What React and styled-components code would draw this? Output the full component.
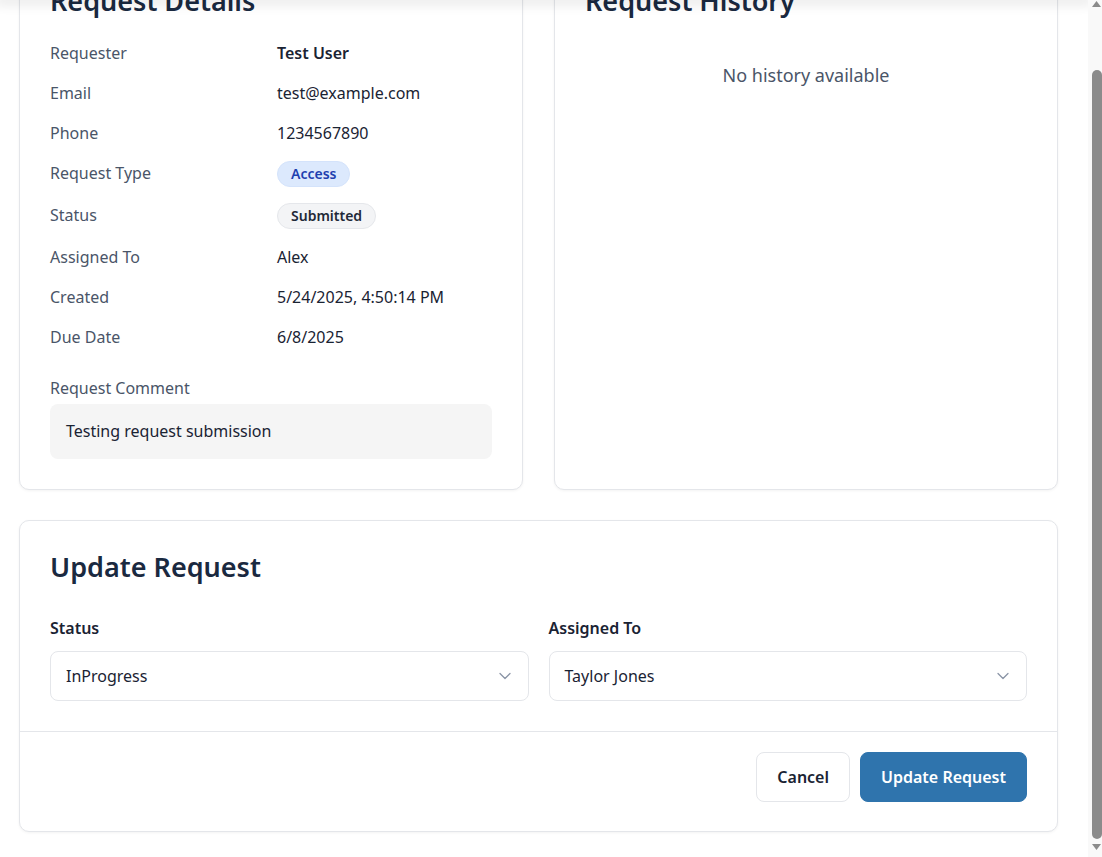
import React, { useLayoutEffect, useRef } from "react";
import styled, { createGlobalStyle } from "styled-components";
import { ChevronDown } from "lucide-react";

const GlobalStyle = createGlobalStyle`
  html, body { margin: 0; padding: 0; height: 100%; overflow: hidden; background: #ffffff; }
  body { font-family: "Segoe UI", "Noto Sans", "Open Sans", sans-serif; color: #1a202c; }
  * { box-sizing: border-box; }
`;

const Shell = styled.div`
  display: flex;
  height: 100vh;
`;

const ScrollArea = styled.div`
  flex: 1;
  min-width: 0;
  height: 100%;
  overflow-y: scroll;
  background: #ffffff;
  scrollbar-width: none;
  &::-webkit-scrollbar { display: none; }
`;

const Rail = styled.div`
  width: 14px;
  flex: none;
  display: flex;
  flex-direction: column;
  background: #f9f9f9;
`;

const RailArrow = styled.svg`
  display: block;
  width: 14px;
  height: ${(p) => p.$h}px;
  flex: none;
`;

const RailTrack = styled.div`
  flex: 1;
  display: flex;
  flex-direction: column;
  padding: 62px 0 4px 4px;
`;

const RailThumb = styled.div`
  flex: 1;
  background: #8b8b8b;
  border-radius: 5px;
`;

const TopShade = styled.div`
  position: sticky;
  top: 0;
  height: 0;
  z-index: 5;
  box-shadow: 0 0 12px 5px rgba(0, 0, 0, 0.09);
`;

const Page = styled.main`
  padding: 14px 30px 25px 19px;
  display: flex;
  flex-direction: column;
  gap: 30px;
`;

const TwoCol = styled.div`
  display: grid;
  grid-template-columns: 1fr 1fr;
  gap: 31px;
`;

const Card = styled.section`
  background: #ffffff;
  border: 1px solid #e4e6ea;
  border-radius: 10px;
  box-shadow: 0 1px 3px rgba(0, 0, 0, 0.05);
  padding: ${(p) => (p.$flush ? "0" : "30px")};
`;

const CardTitle = styled.h2`
  margin: 0 0 ${(p) => p.$gap || 16}px;
  font-size: 27px;
  line-height: 32px;
  font-weight: 600;
  color: #1a2940;
`;

const DetailList = styled.dl`
  margin: 0;
  display: grid;
  grid-template-columns: 227px 1fr;
`;

const Term = styled.dt`
  padding: 8px 0;
  font-size: 16px;
  line-height: 24px;
  color: #4a5568;
`;

const Value = styled.dd`
  margin: 0;
  padding: 8px 0;
  font-size: 16px;
  line-height: 24px;
  font-weight: ${(p) => (p.$strong ? 600 : 400)};
  color: #1a2333;
`;

const Badge = styled.span`
  display: inline-flex;
  align-items: center;
  vertical-align: top;
  height: 26px;
  padding: 0 13px;
  border-radius: 13px;
  font-size: 14px;
  font-weight: 600;
  border: 1px solid ${(p) => (p.$tone === "blue" ? "#d4e3fb" : "#e5e7eb")};
  background: ${(p) => (p.$tone === "blue" ? "#dce9fd" : "#f3f4f6")};
  color: ${(p) => (p.$tone === "blue" ? "#1e40af" : "#1f2937")};
`;

const CommentLabel = styled.div`
  margin-top: 19px;
  font-size: 16px;
  line-height: 24px;
  color: #4a5568;
`;

const CommentBox = styled.div`
  margin-top: 4px;
  background: #f5f5f5;
  border-radius: 8px;
  padding: 15px 16px 16px;
  font-size: 16px;
  line-height: 24px;
  color: #1a2333;
`;

const Empty = styled.p`
  margin: 0;
  padding: 29px 0;
  text-align: center;
  font-size: 18px;
  line-height: 27px;
  color: #4a5568;
`;

const FormBody = styled.div`
  padding: 30px;
`;

const FormGrid = styled.div`
  display: grid;
  grid-template-columns: 1fr 1fr;
  gap: 20px;
`;

const Field = styled.div`
  display: flex;
  flex-direction: column;
  gap: 11px;
`;

const FieldLabel = styled.label`
  font-size: 16px;
  line-height: 24px;
  font-weight: 600;
  color: #1a2333;
`;

const SelectBox = styled.button`
  display: flex;
  align-items: center;
  justify-content: space-between;
  height: 50px;
  padding: 0 13px 0 15px;
  background: #ffffff;
  border: 1px solid #e4e6ea;
  border-radius: 8px;
  font-family: inherit;
  font-size: 16px;
  color: #1a2333;
  text-align: left;
  cursor: pointer;

  svg { color: #8a94a6; }
`;

const Footer = styled.div`
  border-top: 1px solid #e4e6ea;
  padding: 20px 30px 29px;
  display: flex;
  justify-content: flex-end;
  gap: 10px;
`;

const Button = styled.button`
  height: 50px;
  padding: 0 20px;
  border-radius: 8px;
  font-family: inherit;
  font-size: 16px;
  font-weight: 600;
  cursor: pointer;
  border: 1px solid ${(p) => (p.$primary ? "#2f74ad" : "#e4e6ea")};
  background: ${(p) => (p.$primary ? "#2f74ad" : "#ffffff")};
  color: ${(p) => (p.$primary ? "#ffffff" : "#1a2333")};
`;

const details = [
  { label: "Requester", value: "Test User", strong: true },
  { label: "Email", value: "test@example.com" },
  { label: "Phone", value: "1234567890" },
  { label: "Request Type", badge: "Access", tone: "blue" },
  { label: "Status", badge: "Submitted", tone: "gray" },
  { label: "Assigned To", value: "Alex" },
  { label: "Created", value: "5/24/2025, 4:50:14 PM" },
  { label: "Due Date", value: "6/8/2025" },
];

function Select({ value }) {
  return (
    <SelectBox type="button">
      <span>{value}</span>
      <ChevronDown size={20} strokeWidth={1.5} />
    </SelectBox>
  );
}

function Scrollbar() {
  return (
    <Rail aria-hidden="true">
      <RailArrow $h={8} viewBox="0 0 14 8">
        <polygon points="4,7 13,7 8.5,1" fill="#8b8b8b" />
      </RailArrow>
      <RailTrack>
        <RailThumb />
      </RailTrack>
      <RailArrow $h={14} viewBox="0 0 14 14">
        <polygon points="4,1 13,1 8.5,7" fill="#8b8b8b" />
      </RailArrow>
    </Rail>
  );
}

export default function App() {
  const ref = useRef(null);
  useLayoutEffect(() => {
    if (ref.current) ref.current.scrollTop = 60;
  }, []);

  return (
    <>
      <GlobalStyle />
      <Shell>
        <ScrollArea ref={ref}>
          <TopShade />
          <Page>
            <TwoCol>
              <Card>
                <CardTitle>Request Details</CardTitle>
                <DetailList>
                  {details.map((d) => (
                    <React.Fragment key={d.label}>
                      <Term>{d.label}</Term>
                      <Value $strong={d.strong}>
                        {d.badge ? <Badge $tone={d.tone}>{d.badge}</Badge> : d.value}
                      </Value>
                    </React.Fragment>
                  ))}
                </DetailList>
                <CommentLabel>Request Comment</CommentLabel>
                <CommentBox>Testing request submission</CommentBox>
              </Card>
              <Card>
                <CardTitle>Request History</CardTitle>
                <Empty>No history available</Empty>
              </Card>
            </TwoCol>
            <Card $flush>
              <FormBody>
                <CardTitle $gap={33}>Update Request</CardTitle>
                <FormGrid>
                  <Field>
                    <FieldLabel>Status</FieldLabel>
                    <Select value="InProgress" />
                  </Field>
                  <Field>
                    <FieldLabel>Assigned To</FieldLabel>
                    <Select value="Taylor Jones" />
                  </Field>
                </FormGrid>
              </FormBody>
              <Footer>
                <Button type="button">Cancel</Button>
                <Button type="button" $primary>Update Request</Button>
              </Footer>
            </Card>
          </Page>
        </ScrollArea>
        <Scrollbar />
      </Shell>
    </>
  );
}
